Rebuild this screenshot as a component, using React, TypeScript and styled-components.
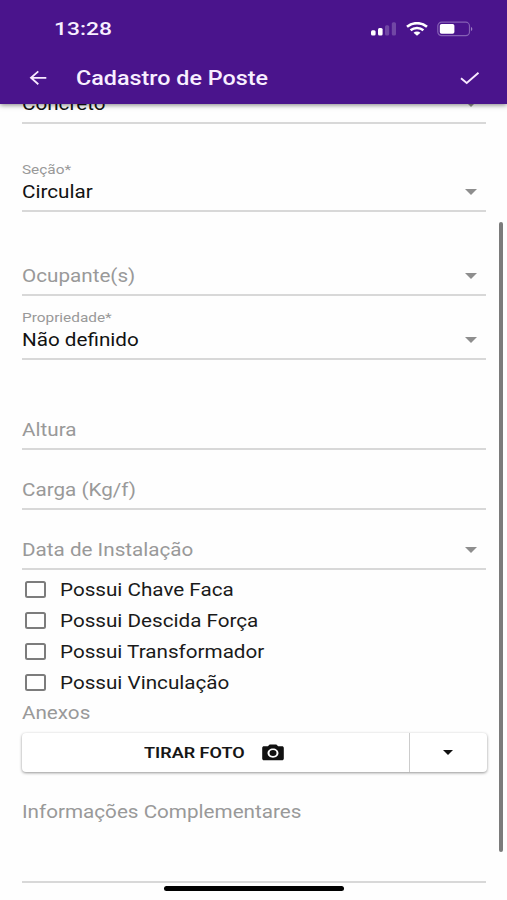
import React from "react";
import styled, { createGlobalStyle } from "styled-components";

const Global = createGlobalStyle`
  * { box-sizing: border-box; }
  html, body { margin: 0; background: #fefefe; }
  body { font-family: Roboto, "Liberation Sans", sans-serif; }
  button { font: inherit; border: 0; padding: 0; background: none; color: inherit; }
`;

const Screen = styled.div`
  position: relative;
  width: 507px;
  height: 900px;
  overflow: hidden;
  display: flex;
  flex-direction: column;
  background: #fefefe;
`;

const Header = styled.header`
  position: relative;
  z-index: 2;
  flex: none;
  height: 104px;
  background: #4a148c;
  color: #f8efff;
  box-shadow: 0 1px 5px rgba(0, 0, 0, 0.5);
`;

const StatusBar = styled.div`
  height: 52px;
  padding: 5px 34px 0 54px;
  display: flex;
  align-items: center;
  justify-content: space-between;
`;

const Clock = styled.div`
  padding-top: 2px;
`;

const StatusIcons = styled.div`
  display: flex;
  align-items: center;
  gap: 9px;
`;

const Toolbar = styled.div`
  height: 52px;
  padding: 0 26px 0 27px;
  display: flex;
  align-items: center;
`;

const IconButton = styled.button`
  display: flex;
  align-items: center;
  justify-content: center;
`;

/* Text drawn with the wide proportions of the whole interface. */
const Wide = styled.span<{ $size: number; $scale?: number; $weight?: number; $drop?: number }>`
  display: inline-block;
  white-space: nowrap;
  padding-top: ${(p) => p.$drop ?? 0}px;
  font-size: ${(p) => p.$size}px;
  line-height: 1.2;
  font-weight: ${(p) => p.$weight ?? 400};
  transform: scaleX(${(p) => p.$scale ?? 1.18});
  transform-origin: left center;
`;

const Title = styled.h1`
  margin: 0 0 0 27px;
  flex: 1;
  font-size: 0;
  line-height: 1;
`;

const Form = styled.main`
  height: 796px;
  padding: 0 21px 0 22px;
  display: flex;
  flex-direction: column;
`;

const Field = styled.div<{ $height: number; $bottom?: number }>`
  flex: none;
  height: ${(p) => p.$height}px;
  padding-bottom: ${(p) => p.$bottom ?? 7}px;
  border-bottom: 2px solid #d8d8d8;
  display: flex;
  align-items: flex-end;
  justify-content: space-between;
`;

const FieldText = styled.div<{ $filled?: boolean }>`
  display: flex;
  flex-direction: column;
  align-items: flex-start;
  color: ${(p) => (p.$filled ? "#121212" : "#999")};
`;

const Caption = styled.div`
  height: 17px;
  margin-bottom: 4px;
  display: flex;
  align-items: center;
  color: #999;
`;

const Caret = styled.span<{ $small?: boolean }>`
  width: 0;
  height: 0;
  border: solid transparent;
  border-width: ${(p) => (p.$small ? "5px 5.5px 0" : "6px 6.5px 0")};
  border-top-color: ${(p) => (p.$small ? "#111" : "#8e8e8e")};
  margin: ${(p) => (p.$small ? "0" : "0 9.5px 8px 0")};
`;

const CheckList = styled.div`
  padding: 4px 0 0 3px;
`;

const CheckRow = styled.label`
  height: 31px;
  display: flex;
  align-items: center;
  gap: 13.5px;
  color: #1a1a1a;
`;

const Box = styled.span`
  width: 21px;
  height: 17px;
  border: 2px solid #7c7c7c;
  border-radius: 2.5px;
`;

const SectionLabel = styled.div`
  height: 30px;
  display: flex;
  align-items: center;
  color: #999;
`;

const SplitButton = styled.div`
  flex: none;
  height: 39px;
  margin: 5px -1px 0 0;
  display: flex;
  border-radius: 4px;
  background: #fff;
  color: #161616;
  box-shadow: 0 1px 3px rgba(0, 0, 0, 0.42);
`;

const PhotoButton = styled.button`
  width: 388px;
  padding-left: 122px;
  border-right: 1px solid #ccc;
  display: flex;
  align-items: center;
`;

const PhotoLabel = styled.span`
  width: 118px;
  display: flex;
`;

const MoreButton = styled.button`
  flex: 1;
  display: flex;
  align-items: center;
  justify-content: center;
  padding-right: 1px;
`;

const ScrollThumb = styled.div`
  position: absolute;
  z-index: 1;
  left: 499px;
  top: 222px;
  width: 4px;
  height: 630px;
  border-radius: 2px;
  background: #7b7b7b;
`;

const HomeIndicator = styled.div`
  position: absolute;
  z-index: 3;
  left: 164px;
  top: 886px;
  width: 180px;
  height: 5px;
  border-radius: 3px;
  background: #000;
`;

const Signal = () => (
  <svg width="26" height="14" viewBox="0 0 26 14" fill="#fff">
    <rect x="0" y="8.3" width="4.6" height="5.2" rx="1.5" />
    <rect x="7" y="6" width="4.6" height="7.5" rx="1.5" />
    <rect x="14" y="3.2" width="4.2" height="10.3" rx="1.5" opacity="0.22" />
    <rect x="20.8" y="0.3" width="4.2" height="13.2" rx="1.5" opacity="0.22" />
  </svg>
);

const Wifi = () => (
  <svg width="22" height="14" viewBox="0 0 22 14" fill="none" stroke="#fff" strokeWidth="2.5">
    <path d="M1 4.8C6.6-.1 15.4-.1 21 4.8" />
    <path d="M4.6 8.3c3.6-3 9.2-3 12.8 0" />
    <path d="M7.5 10.8c1.9-1.6 5.1-1.6 7 0L11 13.8Z" fill="#fff" stroke="none" />
  </svg>
);

const Battery = () => (
  <svg width="36" height="16" viewBox="0 0 36 16" fill="none">
    <rect x="0.8" y="1.2" width="31.7" height="13.4" rx="3.8" stroke="#8560b4" strokeWidth="1.2" />
    <rect x="2.8" y="3" width="14.6" height="9.8" rx="1.8" fill="#fff" />
    <path d="M34 5.9c1.8.7 1.8 3.4 0 4.1Z" fill="#9d7fc2" />
  </svg>
);

const BackArrow = () => (
  <svg width="22" height="18" viewBox="0 0 22 18" fill="none" stroke="#f8e9ff" strokeWidth="1.8">
    <path d="M19.3 8.8H4M11.3 2.4 4 8.8l7.3 6.4" />
  </svg>
);

const Check = () => (
  <svg width="22" height="18" viewBox="0 0 22 18" fill="none" stroke="#f8e9ff" strokeWidth="1.9">
    <path d="m2 9.2 5.7 4.7L19.5 3.8" />
  </svg>
);

const Camera = () => (
  <svg width="22" height="17" viewBox="0 0 22 17" fill="#111">
    <path
      fillRule="evenodd"
      d="M7.7.5h6.6l1.9 1.8H20c1 0 1.8.7 1.8 1.6v10.5c0 1-.8 1.8-1.8 1.8H2c-1 0-1.8-.8-1.8-1.8V3.9c0-.9.8-1.6 1.8-1.6h3.8ZM11 4.4c-3.1 0-5.5 2.1-5.5 4.7s2.4 4.7 5.5 4.7 5.5-2.1 5.5-4.7S14.1 4.4 11 4.4Z"
    />
    <ellipse cx="11" cy="9.1" rx="3.5" ry="3" />
  </svg>
);

type FieldProps = {
  label: string;
  value?: string;
  height: number;
  bottom?: number;
  select?: boolean;
};

const FormField = ({ label, value, height, bottom, select }: FieldProps) => (
  <Field $height={height} $bottom={bottom}>
    <FieldText $filled={!!value}>
      {value && label && (
        <Caption>
          <Wide $size={12.6} $scale={1.22}>{label}</Wide>
        </Caption>
      )}
      <Wide $size={17.5}>{value ?? label}</Wide>
    </FieldText>
    {select && <Caret />}
  </Field>
);

const options = [
  "Possui Chave Faca",
  "Possui Descida Força",
  "Possui Transformador",
  "Possui Vinculação",
];

export default function App() {
  return (
    <Screen>
      <Global />
      <Header>
        <StatusBar>
          <Clock>
            <Wide $size={19} $weight={500} $scale={1.2}>13:28</Wide>
          </Clock>
          <StatusIcons>
            <Signal />
            <Wifi />
            <Battery />
          </StatusIcons>
        </StatusBar>
        <Toolbar>
          <IconButton aria-label="Voltar"><BackArrow /></IconButton>
          <Title>
            <Wide $size={19.3} $weight={500} $scale={1.21} $drop={2}>Cadastro de Poste</Wide>
          </Title>
          <IconButton aria-label="Salvar"><Check /></IconButton>
        </Toolbar>
      </Header>
      <Form>
        <FormField label="" value="Concreto" height={20} select />
        <FormField label="Seção*" value="Circular" height={88} select />
        <FormField label="Ocupante(s)" height={84} select />
        <FormField label="Propriedade*" value="Não definido" height={64} select />
        <FormField label="Altura" height={90} />
        <FormField label="Carga (Kg/f)" height={60} />
        <FormField label="Data de Instalação" height={60} select />
        <CheckList>
          {options.map((option) => (
            <CheckRow key={option}>
              <Box />
              <Wide $size={17.5} $drop={2}>{option}</Wide>
            </CheckRow>
          ))}
        </CheckList>
        <SectionLabel>
          <Wide $size={17.5}>Anexos</Wide>
        </SectionLabel>
        <SplitButton>
          <PhotoButton>
            <PhotoLabel>
              <Wide $size={15} $weight={600} $scale={1.2}>TIRAR FOTO</Wide>
            </PhotoLabel>
            <Camera />
          </PhotoButton>
          <MoreButton aria-label="Mais opções"><Caret $small /></MoreButton>
        </SplitButton>
        <FormField label="Informações Complementares" height={111} bottom={58} />
      </Form>
      <ScrollThumb />
      <HomeIndicator />
    </Screen>
  );
}
